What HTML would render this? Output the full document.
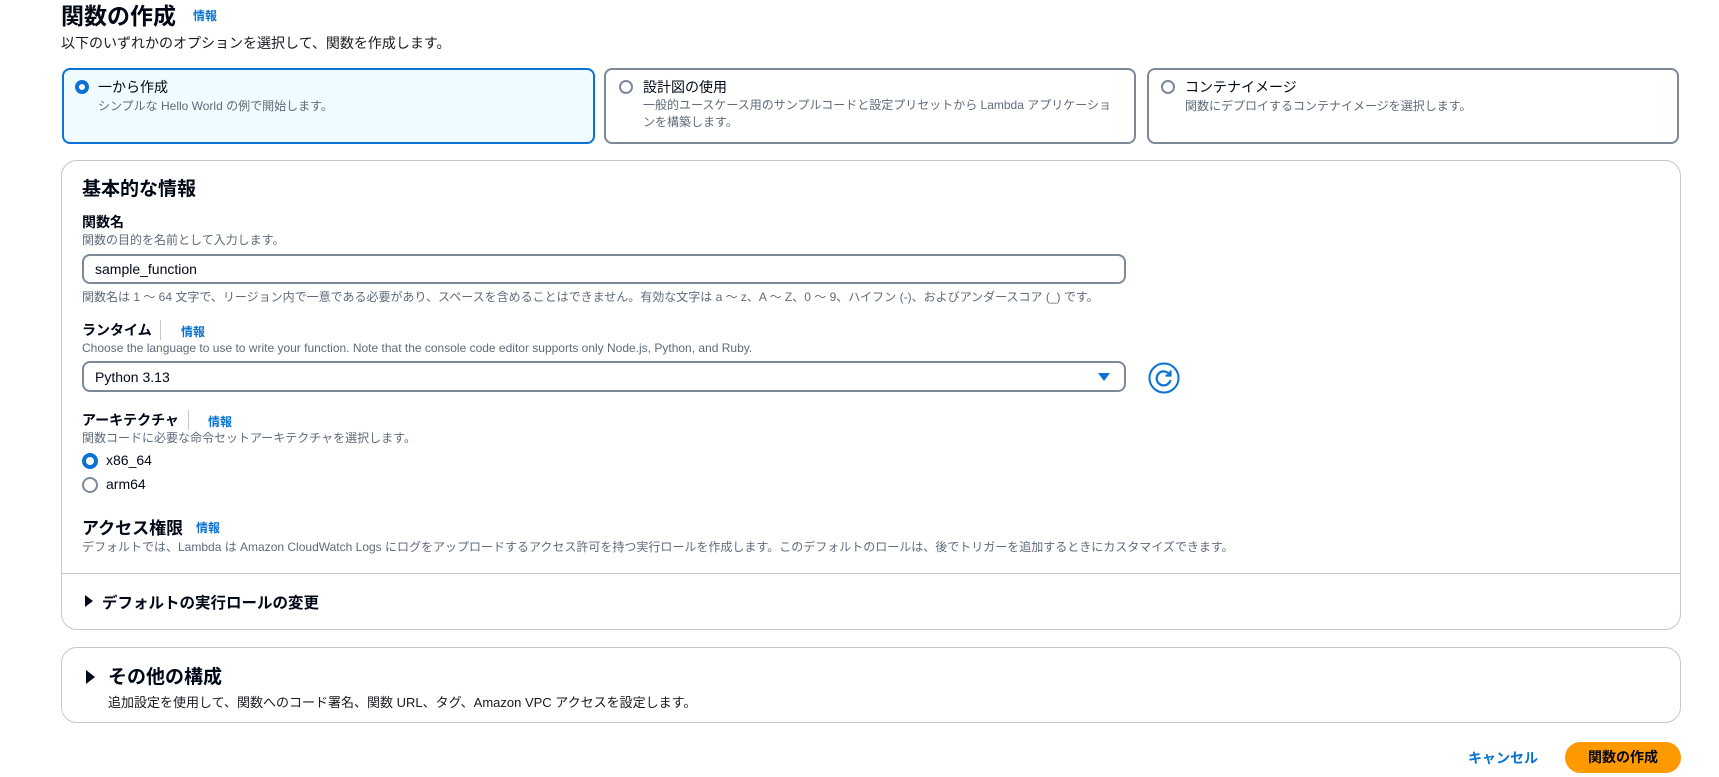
<!DOCTYPE html>
<html><head><meta charset="utf-8"><style>
*{box-sizing:border-box;margin:0;padding:0}
body{width:1719px;height:777px;overflow:hidden;background:#fff;font-family:"Liberation Sans","Noto Sans CJK JP",sans-serif;color:#000716;position:relative}
.a{position:absolute;white-space:nowrap}
.info{color:#0972d3;font-weight:bold;font-size:12px}
.sub{color:#5f6b7a;font-size:12px}
.lbl{font-weight:bold;font-size:14px}
.card{position:absolute;border:2px solid #7d8998;border-radius:8px;background:#fff}
.radio{position:absolute;width:14px;height:14px;border-radius:50%;border:2px solid #7d8998;background:#fff}
.radio.on{border:4px solid #0972d3}
.panel{position:absolute;border:1px solid #c6c6cd;border-radius:16px;background:#fff}
.input{position:absolute;border:2px solid #7d8998;border-radius:8px;background:#fff;font-size:14px;padding-left:11px;display:flex;align-items:center}
</style></head><body>
<div class="a" style="left:61px;top:-3px;font-size:23px;font-weight:bold">関数の作成</div>
<div class="a info" style="left:193px;top:7px">情報</div>
<div class="a" style="left:61px;top:33px;font-size:14px;color:#16191f">以下のいずれかのオプションを選択して、関数を作成します。</div>

<div class="card" style="left:62px;top:68px;width:533px;height:76px;border-color:#0972d3;background:#f0fbff"></div>
<div class="radio on" style="left:75px;top:80px"></div>
<div class="a" style="left:98px;top:77px;font-size:14px">一から作成</div>
<div class="a sub" style="left:98px;top:97px">シンプルな Hello World の例で開始します。</div>

<div class="card" style="left:604px;top:68px;width:532px;height:76px"></div>
<div class="radio" style="left:619px;top:80px"></div>
<div class="a" style="left:643px;top:77px;font-size:14px">設計図の使用</div>
<div class="a sub" style="left:643px;top:97px;line-height:17px">一般的ユースケース用のサンプルコードと設定プリセットから Lambda アプリケーショ<br>ンを構築します。</div>

<div class="card" style="left:1147px;top:68px;width:532px;height:76px"></div>
<div class="radio" style="left:1161px;top:80px"></div>
<div class="a" style="left:1185px;top:77px;font-size:14px">コンテナイメージ</div>
<div class="a sub" style="left:1185px;top:97px">関数にデプロイするコンテナイメージを選択します。</div>

<div class="panel" style="left:61px;top:160px;width:1620px;height:470px"></div>
<div class="a" style="left:82px;top:174px;font-size:19px;font-weight:bold">基本的な情報</div>
<div class="a lbl" style="left:82px;top:212px">関数名</div>
<div class="a sub" style="left:82px;top:231px">関数の目的を名前として入力します。</div>
<div class="input" style="left:82px;top:254px;width:1044px;height:30px">sample_function</div>
<div class="a sub" style="left:82px;top:288px">関数名は 1 ～ 64 文字で、リージョン内で一意である必要があり、スペースを含めることはできません。有効な文字は a ～ z、A ～ Z、0 ～ 9、ハイフン (-)、およびアンダースコア (_) です。</div>

<div class="a lbl" style="left:82px;top:320px">ランタイム</div>
<div class="a" style="left:160px;top:320px;width:1px;height:20px;background:#c6c6cd"></div>
<div class="a info" style="left:181px;top:323px">情報</div>
<div class="a sub" style="left:82px;top:341px">Choose the language to use to write your function. Note that the console code editor supports only Node.js, Python, and Ruby.</div>
<div class="input" style="left:82px;top:361px;width:1044px;height:31px">Python 3.13</div>
<div class="a" style="left:1098px;top:373px;width:0;height:0;border-left:6px solid transparent;border-right:6px solid transparent;border-top:8px solid #0972d3"></div>
<svg class="a" style="left:1148px;top:362px" width="32" height="32" viewBox="0 0 32 32"><circle cx="16" cy="16" r="14.5" fill="none" stroke="#0972d3" stroke-width="2"/><path d="M21.5 12.5A7 7 0 1 0 22.5 18" fill="none" stroke="#0972d3" stroke-width="2.2"/><path d="M22.5 8.5V13.5H17.5" fill="none" stroke="#0972d3" stroke-width="2.2"/></svg>

<div class="a lbl" style="left:82px;top:410px">アーキテクチャ</div>
<div class="a" style="left:188px;top:410px;width:1px;height:20px;background:#c6c6cd"></div>
<div class="a info" style="left:208px;top:413px">情報</div>
<div class="a sub" style="left:82px;top:429px">関数コードに必要な命令セットアーキテクチャを選択します。</div>
<div class="radio on" style="left:82px;top:453px;width:16px;height:16px"></div>
<div class="a" style="left:106px;top:452px;font-size:14px">x86_64</div>
<div class="radio" style="left:82px;top:477px;width:16px;height:16px"></div>
<div class="a" style="left:106px;top:476px;font-size:14px">arm64</div>

<div class="a" style="left:82px;top:514px;font-size:17px;font-weight:bold">アクセス権限</div>
<div class="a info" style="left:196px;top:519px">情報</div>
<div class="a sub" style="left:82px;top:538px">デフォルトでは、Lambda は Amazon CloudWatch Logs にログをアップロードするアクセス許可を持つ実行ロールを作成します。このデフォルトのロールは、後でトリガーを追加するときにカスタマイズできます。</div>
<div class="a" style="left:62px;top:573px;width:1618px;height:1px;background:#c6c6cd"></div>
<div class="a" style="left:85px;top:595px;border-left:8px solid #000716;border-top:6px solid transparent;border-bottom:6px solid transparent"></div>
<div class="a" style="left:102px;top:591px;font-size:15.5px;font-weight:bold">デフォルトの実行ロールの変更</div>

<div class="panel" style="left:61px;top:647px;width:1620px;height:76px"></div>
<div class="a" style="left:86px;top:670px;border-left:9px solid #000716;border-top:7px solid transparent;border-bottom:7px solid transparent"></div>
<div class="a" style="left:108px;top:662px;font-size:19px;font-weight:bold">その他の構成</div>
<div class="a sub" style="left:108px;top:692px;color:#16191f;font-size:13px">追加設定を使用して、関数へのコード署名、関数 URL、タグ、Amazon VPC アクセスを設定します。</div>

<div class="a" style="left:1468px;top:748px;font-size:14px;font-weight:bold;color:#0972d3">キャンセル</div>
<div class="a" style="left:1565px;top:742px;width:116px;height:31px;border-radius:16px;background:#ff9900;font-size:14px;font-weight:bold;text-align:center;line-height:31px">関数の作成</div>
</body></html>
